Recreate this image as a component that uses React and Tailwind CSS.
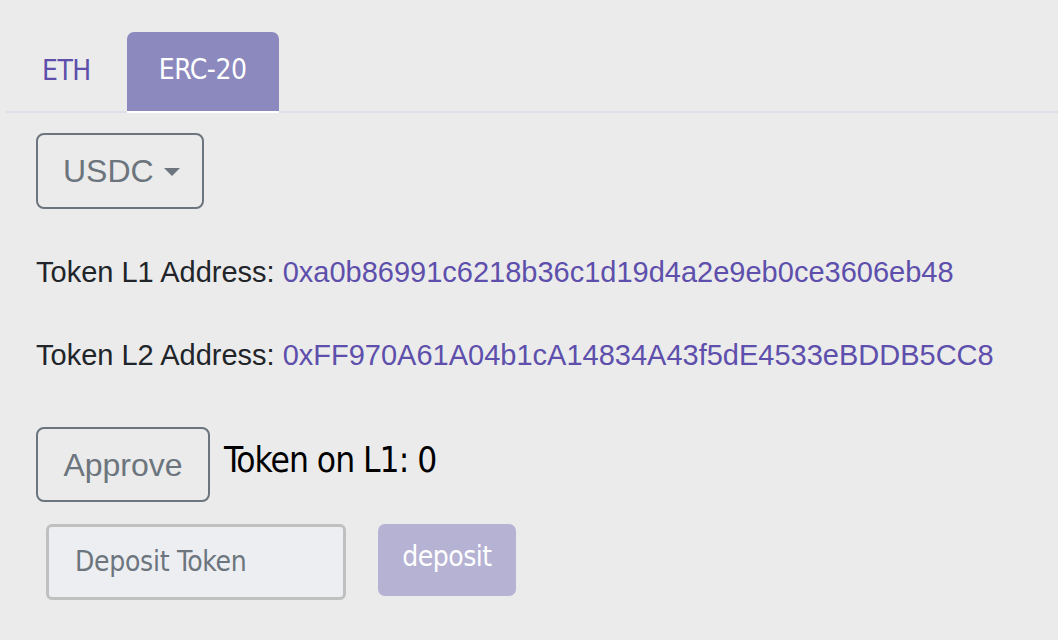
import React, { useState } from "react";

const narrow = { fontFamily: "'Liberation Sans Narrow', 'DejaVu Sans Condensed', 'Roboto', sans-serif" };

function App() {
  const [tab, setTab] = useState("erc20");
  const [amount, setAmount] = useState("");

  return (
    <div className="min-h-screen w-full bg-[#ebebeb] pl-[6px] text-[#212529] font-['Liberation_Sans',Arial,sans-serif]">
      <div className="pt-[32px] flex border-b-2 border-[#dde0ea]" style={narrow}>
        <button
          className={
            "h-[81px] px-[36px] text-[28px] tracking-[-0.5px] rounded-t-[7px] -mb-[2px] pb-[4px] " +
            (tab === "eth" ? "bg-[#8b89bd] text-white border-b-2 border-white" : "text-[#5d4fab]")
          }
          onClick={() => setTab("eth")}
        >
          ETH
        </button>
        <button
          className={
            "h-[81px] px-[32px] text-[28px] tracking-[-0.5px] rounded-t-[7px] -mb-[2px] pb-[4px] " +
            (tab === "erc20" ? "bg-[#8b89bd] text-white border-b-2 border-white" : "text-[#5d4fab]")
          }
          onClick={() => setTab("erc20")}
        >
          ERC-20
        </button>
      </div>

      <div className="pl-[30px]">
        <button className="mt-[20px] h-[76px] w-[168px] border-2 border-[#6c757d] rounded-[8px] flex items-center pl-[25px] text-[32px] text-[#6c757d]">
          USDC
          <span className="ml-[10px] mt-[2px] w-0 h-0 border-l-[8px] border-r-[8px] border-t-[8px] border-l-transparent border-r-transparent border-t-[#6c757d]"></span>
        </button>

        <p className="mt-[45px] text-[29px] leading-[36px]">
          Token L1 Address: <span className="text-[#5d4fab]">0xa0b86991c6218b36c1d19d4a2e9eb0ce3606eb48</span>
        </p>
        <p className="mt-[47px] text-[29px] leading-[36px]">
          Token L2 Address: <span className="text-[#5d4fab]">0xFF970A61A04b1cA14834A43f5dE4533eBDDB5CC8</span>
        </p>

        <div className="mt-[54px] flex items-center">
          <button className="h-[75px] w-[174px] border-2 border-[#6c757d] rounded-[8px] text-[32px] text-[#6c757d] pt-[1px]">
            Approve
          </button>
          <span className="ml-[14px] text-[35px] tracking-[-1px] text-black -mt-[8px]" style={narrow}>
            Token on L1: 0
          </span>
        </div>

        <div className="mt-[22px] ml-[10px] flex items-start" style={narrow}>
          <input
            className="h-[76px] w-[300px] border-[3px] border-[#c0c0c0] rounded-[6px] bg-[#eceef2] pl-[26px] pb-[2px] text-[28px] tracking-[-0.3px] text-[#212529] placeholder:text-[#6c757d] outline-none"
            placeholder="Deposit Token"
            value={amount}
            onChange={(e) => setAmount(e.target.value)}
          />
          <button className="ml-[32px] h-[72px] w-[138px] rounded-[7px] bg-[#b5b2d3] text-white text-[28px] tracking-[-0.5px] pb-[6px]">
            deposit
          </button>
        </div>
      </div>
    </div>
  );
}

export default App;
